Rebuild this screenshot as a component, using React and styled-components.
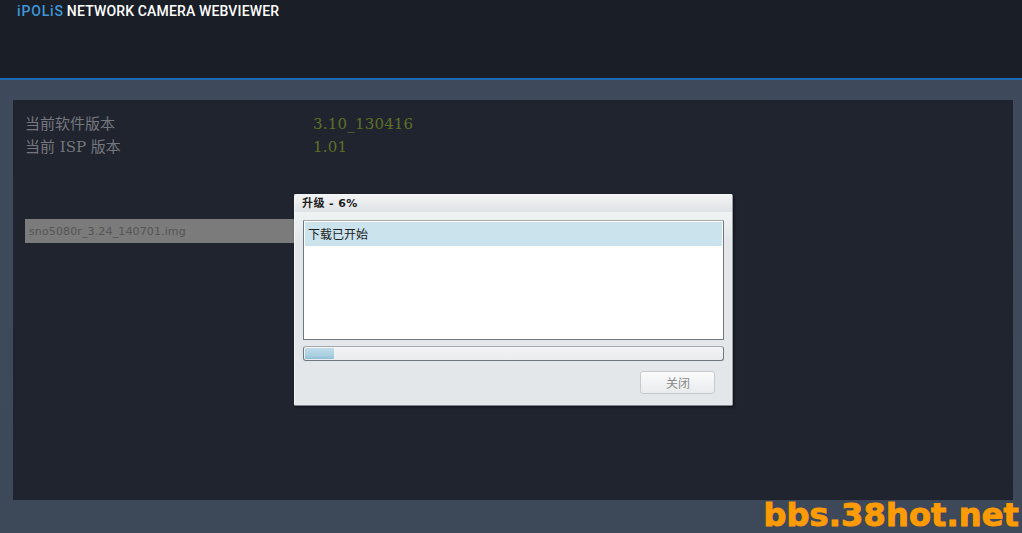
import React from 'react';
import styled, { createGlobalStyle } from 'styled-components';

const GlobalStyle = createGlobalStyle`
  html, body {
    margin: 0;
    padding: 0;
    height: 100%;
    overflow: hidden;
    background: #3f4a5c;
  }
`;

const Page = styled.div`
  position: relative;
  width: 1022px;
  height: 533px;
  overflow: hidden;
  background: linear-gradient(#3f4a5c, #3d4859);
  display: flex;
  flex-direction: column;
`;

const Header = styled.header`
  height: 78px;
  box-sizing: content-box;
  background: #1a1e27;
  border-bottom: 2px solid #1f6cb0;
  padding-left: 17px;
`;

const Brand = styled.div`
  display: flex;
  gap: 3px;
  padding-top: 3px;
  font-family: Roboto, sans-serif;
  font-weight: 500;
  font-size: 14px;
  line-height: 17px;
  letter-spacing: 0.15px;
  color: #fff;
`;

const BrandMark = styled.span`
  color: #3f97d8;
  letter-spacing: 0.85px;
`;

const Panel = styled.main`
  margin: 20px 9px 0 13px;
  height: 400px;
  background: #20242e;
  padding: 13px 12px;
  box-sizing: border-box;
`;

const InfoRow = styled.div`
  display: grid;
  grid-template-columns: 288px 1fr;
  height: 23px;
  line-height: 23px;
  font-size: 15px;
  font-family: "DejaVu Serif", "Noto Sans CJK SC", serif;
`;

const InfoLabel = styled.span`
  color: #74777d;
`;

const InfoValue = styled.span`
  color: #5f6f26;
  letter-spacing: 0.2px;
`;

const FileField = styled.div`
  margin-top: 60px;
  width: 270px;
  height: 24px;
  line-height: 25px;
  padding-left: 4px;
  box-sizing: border-box;
  background: #7b7b7b;
  color: #555;
  font-family: "DejaVu Sans", sans-serif;
  font-size: 11px;
  letter-spacing: 0.13px;
`;

const Dialog = styled.section`
  position: absolute;
  left: 294px;
  top: 194px;
  width: 439px;
  height: 212px;
  box-sizing: border-box;
  border: 1px solid #f4f6f7;
  border-right-color: #9aa0a6;
  border-bottom-color: #7f858c;
  border-radius: 2px;
  background: #e3e6e9;
  box-shadow: 1px 1px 3px rgba(0, 0, 0, 0.6);
  display: flex;
  flex-direction: column;
`;

const DialogTitle = styled.div`
  height: 17px;
  line-height: 17px;
  padding-left: 7px;
  background: linear-gradient(#f2f3f4, #dfe2e5);
  font-family: "DejaVu Sans", "Noto Sans CJK SC", sans-serif;
  font-size: 11px;
  font-weight: 700;
  letter-spacing: 0.4px;
  color: #1c1c1c;
`;

const DialogBody = styled.div`
  flex: 1;
  padding: 8px 8px 0;
  background: linear-gradient(#f0f3f3, #e4e7ea 30px);
  display: flex;
  flex-direction: column;
`;

const LogBox = styled.div`
  height: 120px;
  box-sizing: border-box;
  padding: 1px;
  background: #fff;
  border: 1px solid #70777f;
  border-top-color: #a5abb0;
  border-radius: 1px;
`;

const LogLine = styled.div`
  height: 24px;
  line-height: 23px;
  padding-left: 3px;
  background: #cae3ed;
  color: #222;
  font-family: "Noto Sans CJK SC", sans-serif;
  font-size: 12px;
`;

const Progress = styled.div`
  margin-top: 6px;
  height: 15px;
  box-sizing: border-box;
  padding: 1px;
  background: linear-gradient(#f4f4f4, #e9ebec);
  border: 1px solid #70777f;
  border-top-color: #a5abb0;
  border-radius: 3px;
`;

const ProgressFill = styled.div`
  height: 100%;
  background: linear-gradient(#c2dce9, #a9cfe2 70%, #8fbcd1);
  border-radius: 1px;
`;

const DialogFooter = styled.div`
  display: flex;
  justify-content: flex-end;
  padding: 10px 9px 0 0;
`;

const CloseButton = styled.button`
  width: 75px;
  height: 23px;
  padding: 0 0 0 1px;
  background: linear-gradient(#fbfbfb, #e9ebed);
  border: 1px solid #c6cacd;
  border-radius: 3px;
  color: #8a8a8a;
  font-family: "Noto Sans CJK SC", sans-serif;
  font-size: 12px;
`;

const Watermark = styled.div`
  position: absolute;
  right: 3px;
  top: 497px;
  font-family: "DejaVu Sans", sans-serif;
  font-weight: 700;
  font-size: 32px;
  line-height: 36px;
  letter-spacing: 0.15px;
  color: #fd9b05;
  -webkit-text-stroke: 1px #fd9b05;
  white-space: nowrap;
`;

const App = () => {
  const percent = 6;
  return (
    <Page>
      <GlobalStyle />
      <Header>
        <Brand>
          <BrandMark>iPOLiS</BrandMark>
          <span>NETWORK CAMERA WEBVIEWER</span>
        </Brand>
      </Header>
      <Panel>
        <InfoRow>
          <InfoLabel>当前软件版本</InfoLabel>
          <InfoValue>3.10_130416</InfoValue>
        </InfoRow>
        <InfoRow>
          <InfoLabel>当前 ISP 版本</InfoLabel>
          <InfoValue>1.01</InfoValue>
        </InfoRow>
        <FileField>sno5080r_3.24_140701.img</FileField>
      </Panel>
      <Dialog>
        <DialogTitle>升级 - {percent}%</DialogTitle>
        <DialogBody>
          <LogBox>
            <LogLine>下载已开始</LogLine>
          </LogBox>
          <Progress>
            <ProgressFill style={{ width: `${percent + 1}%` }} />
          </Progress>
          <DialogFooter>
            <CloseButton disabled>关闭</CloseButton>
          </DialogFooter>
        </DialogBody>
      </Dialog>
      <Watermark>bbs.38hot.net</Watermark>
    </Page>
  );
};

export default App;
